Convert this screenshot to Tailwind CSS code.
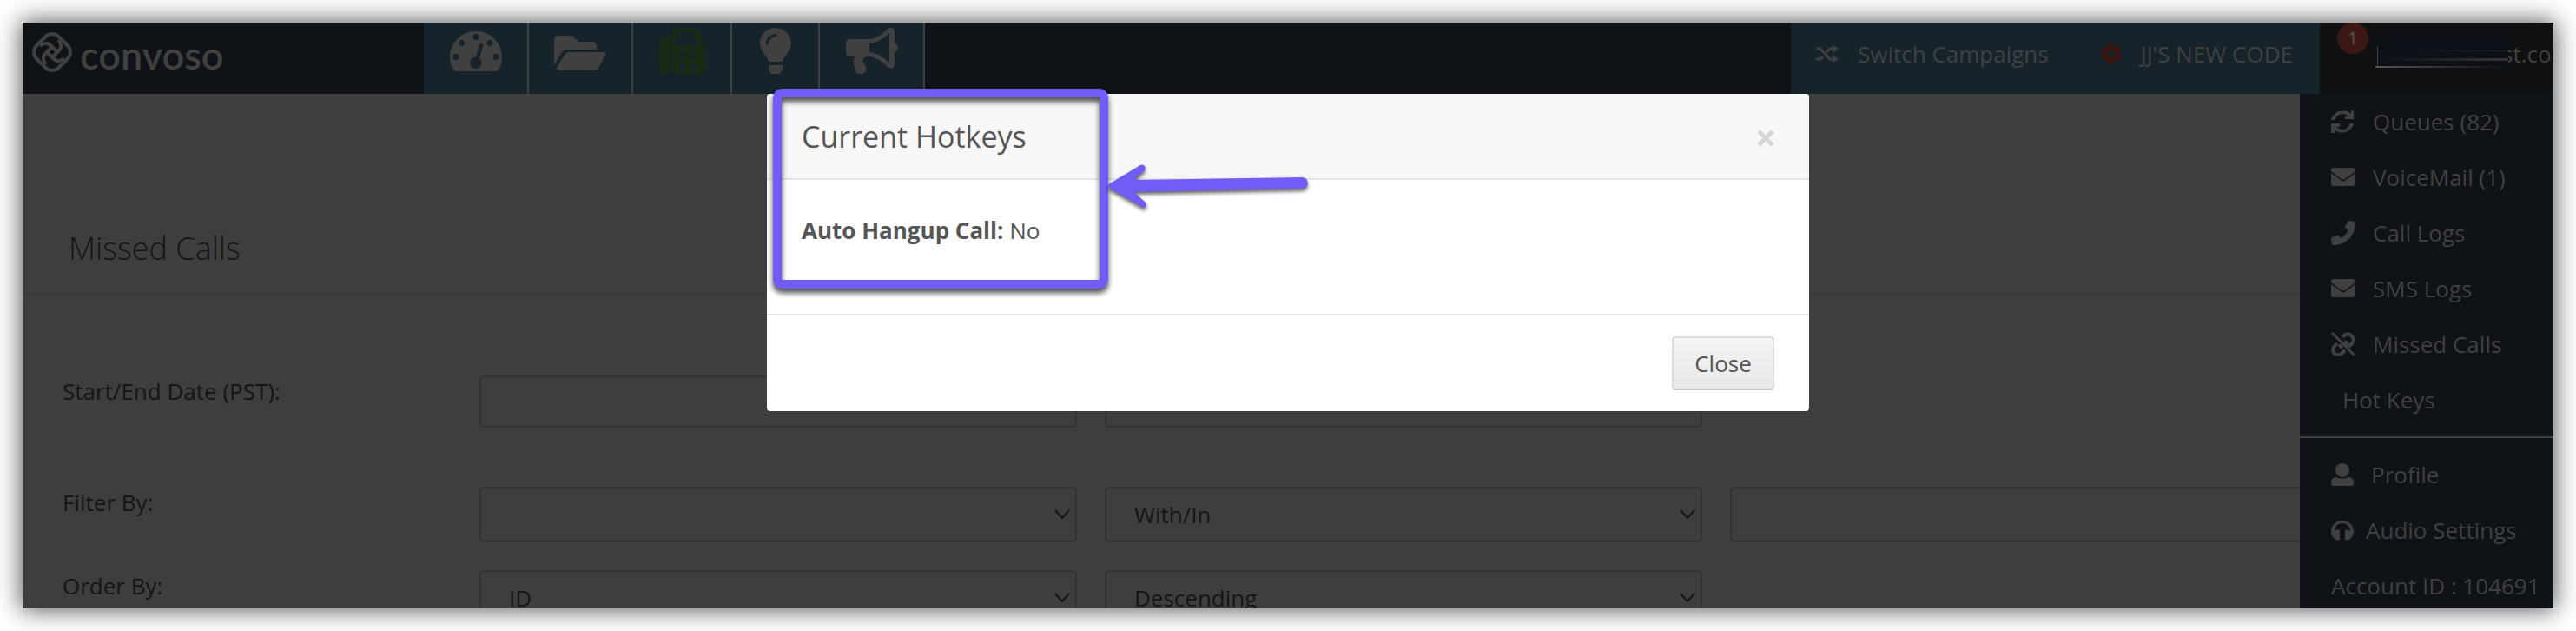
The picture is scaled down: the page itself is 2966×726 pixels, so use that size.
<!DOCTYPE html>
<html lang="en">
<head>
    <meta charset="UTF-8">
    <meta name="viewport" content="width=device-width, initial-scale=1.0">
    <title>Missed Calls</title>
    <script src="https://cdn.jsdelivr.net/npm/@tailwindcss/browser@4"></script>
</head>
<body class="bg-white p-[26px] h-screen overflow-hidden font-['Open_Sans',sans-serif] text-[26px] text-[#404040]">
    <div class="relative h-full shadow-[0_0_26px_2px_rgba(0,0,0,0.65)]">
    <div class="relative h-full overflow-hidden bg-[#3e3e3e] flex flex-col">

        <!-- Top bar -->
        <header class="flex h-[82px] shrink-0 bg-[#0f1216]">
            <a href="#" class="flex items-center gap-2 w-[462px] pl-[10px] pb-2 font-['Lato',sans-serif] font-semibold text-[45px] leading-[48px]">
                <svg class="size-12 mt-[-6px]" viewBox="0 0 48 48" fill="none" stroke="currentColor" stroke-width="4">
                    <rect x="6" y="6" width="36" height="36" rx="11" transform="rotate(45 24 24)"/>
                    <path d="M10 17c4-4 9-4 12-1l9 9"/>
                    <path d="M10 17c4-4 9-4 12-1l9 9" transform="rotate(90 24 24)"/>
                    <path d="M10 17c4-4 9-4 12-1l9 9" transform="rotate(180 24 24)"/>
                    <path d="M10 17c4-4 9-4 12-1l9 9" transform="rotate(270 24 24)"/>
                </svg>
                <span>convoso</span>
            </a>
            <nav class="flex bg-[#16232b]">
                <a href="#" aria-label="Dashboard" class="w-[121px] border-r-2 border-[#404040] flex justify-center pt-[10px]">
                    <svg class="w-[60px] h-[46px]" viewBox="0 0 60 46" fill="currentColor">
                        <path fill-rule="evenodd" d="M30 0C13 0 0 13 0 30c0 5 1 10 4 14 1 1 2 2 3 2h46c1 0 2-1 3-2 3-4 4-9 4-14C60 13 47 0 30 0zM30 3a3.500 3.500 0 1 1 0 7a3.500 3.500 0 0 1 0-7zM13.500 10a3.500 3.500 0 1 1 0 7a3.500 3.500 0 0 1 0-7zM46 10a3.500 3.500 0 1 1 0 7a3.500 3.500 0 0 1 0-7zM7 26a3.500 3.500 0 1 1 0 7a3.500 3.500 0 0 1 0-7zM53 26a3.500 3.500 0 1 1 0 7a3.500 3.500 0 0 1 0-7zM34.500 15c.5-2 4.500-1 4 1l-4.500 15c5 4 2 12-4 12c-7 0-9-9-3.500-12.500c1-.7 2-1 3.500-1z"/>
                    </svg>
                </a>
                <a href="#" aria-label="Files" class="w-[120px] border-r-2 border-[#404040] flex justify-center pt-[15px]">
                    <svg class="w-[60px] h-[40px]" viewBox="0 0 60 40" fill="currentColor">
                        <path d="M0 34V5c0-3 2-5 5-5h16l7 7h16c3 0 5 2 5 5v4H16c-4 0-6 1-8 4L0 34zM3 37l9-15c1-2 3-3 5-3h40c2 0 3 2 2 4l-8 14c-1 2-3 3-5 3H5c-2 0-3-2-2-3z"/>
                    </svg>
                </a>
                <a href="#" aria-label="Fax" class="w-[114px] border-r-2 border-[#404040] flex justify-center pt-[6px] text-[#172a14]">
                    <svg class="w-[53px] h-[53px]" viewBox="0 0 53 53" fill="currentColor">
                        <path fill-rule="evenodd" d="M6.500 10C10 10 13 12 13 16v31c0 4-3 6-6.500 6S0 51 0 47V16c0-4 3-6 6.500-6zM19 0h22l8 8v10c2 1 4 3 4 6v23c0 3-3 6-6 6H20c-3 0-5-3-5-6V4c0-2 2-4 4-4zM20 5v15h24V11h-5V5zM23 27v7h6v-7zM36 27v7h6v-7zM23 40v7h6v-7zM36 40v7h6v-7z"/>
                    </svg>
                </a>
                <a href="#" aria-label="Tips" class="w-[101px] border-r-2 border-[#404040] flex justify-center pt-[6px]">
                    <svg class="w-[36px] h-[53px]" viewBox="0 0 36 53" fill="currentColor">
                        <path fill-rule="evenodd" d="M18 0C8 0 0 8 0 18c0 9 8 13 10 21h16c2-8 10-12 10-21C36 8 28 0 18 0zM18 7c-6 0-11 5-11 11a1 1 0 0 0 3 0c0-4 4-8 8-8a1 1 0 0 0 0-3zM10 43h16v5l-3 5H13l-3-5z"/>
                    </svg>
                </a>
                <a href="#" aria-label="Announcements" class="w-[121px] border-r-2 border-[#404040] flex justify-center pt-[6px]">
                    <svg class="w-[60px] h-[53px]" viewBox="0 0 60 53" fill="currentColor">
                        <path fill-rule="evenodd" d="M5 13h20C36 13 43 6 47 2c4-4 9-2 9 2v14c5 1 5 9 0 10v14c0 5-5 6-9 2-4-4-10-9-19-11-4-1-7 0-8 3-2 5 5 7 3 13 0 1-1 4-5 4s-6 0-7-3c-2-6-3-11-1-17H5c-3 0-5-2-5-5V18c0-3 2-5 5-5zM27 18v10c10 1 17 7 23 12V6c-6 6-13 11-23 12z"/>
                    </svg>
                </a>
            </nav>
            <div class="ml-auto flex items-center w-[609px] pl-[29px] pb-[10px] bg-[#16232b]">
                <a href="#" class="flex items-center gap-[22px]">
                    <svg class="w-[26px] h-[20px]" viewBox="0 0 26 20" fill="none" stroke="currentColor" stroke-width="3">
                        <path d="M0 4h5l11 12h5M0 16h5l3-3M12 8l4-4h5"/>
                        <path d="M19 0l7 4-7 5zM19 11l7 5-7 4z" fill="currentColor" stroke="none"/>
                    </svg>
                    <span>Switch Campaigns</span>
                </a>
                <a href="#" class="flex items-center gap-[22px] ml-[60px]">
                    <svg class="size-6 text-[#3d1510]" viewBox="0 0 24 24" fill="currentColor">
                        <path fill-rule="evenodd" d="M9.500 0h5l1 4 2 1 4-1 2.500 4-3 3v2l3 3-2.500 4-4-1-2 1-1 4h-5l-1-4-2-1-4 1L0 16l3-3v-2L0 8l2.500-4 4 1 2-1zM12 8a4 4 0 1 0 0 8a4 4 0 0 0 0-8z"/>
                    </svg>
                    <span>JJ'S NEW CODE</span>
                </a>
            </div>
            <div class="relative w-[269px] bg-[#0f1012] overflow-hidden">
                <a href="#" class="absolute left-[210px] top-[18px] leading-9">st.com</a>
                <span class="absolute left-[64px] top-[50px] w-[150px] h-[2px] bg-linear-to-r from-[#555] to-transparent"></span>
                <span class="absolute left-[67px] top-[12px] w-[150px] h-[38px] bg-[#0e1017]"></span>
                <span class="absolute left-[66px] top-[27px] w-px h-[23px] bg-[#404040]"></span>
                <span class="absolute left-[90px] top-[32px] w-[127px] h-px bg-linear-to-r from-transparent to-[#262626]"></span>
                <span class="absolute left-[70px] top-[41px] w-[147px] h-[3px] bg-linear-to-r from-transparent to-[#363636]"></span>
                <span class="absolute left-[20px] top-0 size-9 rounded-full bg-[#3c1815] text-center text-[20px] leading-9 text-[#555]">1</span>
            </div>
        </header>

        <div class="flex flex-1 min-h-0">
            <!-- Page -->
            <main class="flex-1 min-w-0 text-[#151515]">
                <h1 class="h-[232px] pt-[153px] pl-[53px] border-b-4 border-[#3b3b3b] font-light text-[36px] leading-[49px]">Missed Calls</h1>
                <form class="pt-[92px] pl-[46px]">
                    <div class="flex gap-8 mb-[68px]">
                        <label for="start" class="w-[448px] shrink-0 leading-9">Start/End Date (PST):</label>
                        <input id="start" type="text" class="w-[688px] h-[60px] shrink-0 px-8 rounded border-2 border-[#343434]">
                        <input aria-label="End date" type="text" class="w-[688px] h-[60px] shrink-0 px-8 rounded border-2 border-[#343434]">
                    </div>
                    <div class="flex gap-8 mb-8 overflow-hidden">
                        <label for="filter" class="w-[448px] shrink-0 leading-9">Filter By:</label>
                        <div class="relative w-[688px] shrink-0">
                            <select id="filter" class="appearance-none w-full h-16 px-8 rounded border-2 border-[#343434]"><option></option></select>
                            <svg class="absolute right-[7px] top-[26px] w-[20px] h-[12px] pointer-events-none" viewBox="0 0 20 12" fill="none" stroke="currentColor" stroke-width="2"><path d="M2 1l8 9 8-9"/></svg>
                        </div>
                        <div class="relative w-[688px] shrink-0">
                            <select aria-label="Match" class="appearance-none w-full h-16 px-8 rounded border-2 border-[#343434]"><option>With/In</option></select>
                            <svg class="absolute right-[7px] top-[26px] w-[20px] h-[12px] pointer-events-none" viewBox="0 0 20 12" fill="none" stroke="currentColor" stroke-width="2"><path d="M2 1l8 9 8-9"/></svg>
                        </div>
                        <input aria-label="Filter value" type="text" class="w-[688px] h-16 shrink-0 px-8 rounded border-2 border-[#343434]">
                    </div>
                    <div class="flex gap-8">
                        <label for="order" class="w-[448px] shrink-0 leading-9">Order By:</label>
                        <div class="relative w-[688px] shrink-0">
                            <select id="order" class="appearance-none w-full h-16 px-8 rounded border-2 border-[#343434]"><option>ID</option></select>
                            <svg class="absolute right-[7px] top-[26px] w-[20px] h-[12px] pointer-events-none" viewBox="0 0 20 12" fill="none" stroke="currentColor" stroke-width="2"><path d="M2 1l8 9 8-9"/></svg>
                        </div>
                        <div class="relative w-[688px] shrink-0">
                            <select aria-label="Direction" class="appearance-none w-full h-16 px-8 rounded border-2 border-[#343434]"><option>Descending</option></select>
                            <svg class="absolute right-[7px] top-[26px] w-[20px] h-[12px] pointer-events-none" viewBox="0 0 20 12" fill="none" stroke="currentColor" stroke-width="2"><path d="M2 1l8 9 8-9"/></svg>
                        </div>
                    </div>
                </form>
            </main>

            <!-- User menu -->
            <aside class="w-[292px] shrink-0 bg-[#0f1216] leading-[64px] whitespace-nowrap">
                <ul class="pb-[10px] border-b-2 border-[#404040]">
                    <li><a href="#" class="flex items-center gap-5 pl-9">
                        <svg class="size-7" viewBox="0 0 28 28" fill="currentColor">
                            <path d="M26 1v10H16V8h4C15 3 7 4 4 12H0C3 1 16-2 23 5V1zM0 27V16h10v4H6c5 5 13 4 16-4h4C23 27 10 30 4 23v4z"/>
                        </svg>
                        Queues (82)
                    </a></li>
                    <li><a href="#" class="flex items-center gap-5 pl-9">
                        <svg class="size-7" viewBox="0 0 28 28" fill="currentColor">
                            <path d="M3 3h22c2 0 3 1 3 3v1L16 16c-1 1-3 1-4 0L0 7V6c0-2 1-3 3-3zM0 9l11 8c2 2 4 2 6 0l11-8v12c0 2-1 3-3 3H3c-2 0-3-1-3-3z"/>
                        </svg>
                        VoiceMail (1)
                    </a></li>
                    <li><a href="#" class="flex items-center gap-5 pl-9">
                        <svg class="size-7" viewBox="0 0 28 28" fill="currentColor">
                            <path d="M21 0l6 1c1 0 1 1 1 2C28 17 17 28 3 28c-1 0-1 0-2-1l-1-6c0-1 0-2 1-2l6-2c1-1 2 0 2 0l2 3c4-2 7-5 9-9l-3-2c-1-1-1-1-1-2l3-6c0-1 1-1 2-1z"/>
                        </svg>
                        Call Logs
                    </a></li>
                    <li><a href="#" class="flex items-center gap-5 pl-9">
                        <svg class="size-7" viewBox="0 0 28 28" fill="currentColor">
                            <path d="M3 3h22c2 0 3 1 3 3v1L16 16c-1 1-3 1-4 0L0 7V6c0-2 1-3 3-3zM0 9l11 8c2 2 4 2 6 0l11-8v12c0 2-1 3-3 3H3c-2 0-3-1-3-3z"/>
                        </svg>
                        SMS Logs
                    </a></li>
                    <li><a href="#" class="flex items-center gap-5 pl-9">
                        <svg class="size-7" viewBox="0 0 28 28" fill="none" stroke="currentColor" stroke-width="4">
                            <path d="M1 1l26 26" stroke-width="3"/>
                            <path d="M13 6c4-5 9-4 11-1 3 3 2 6 0 8l-4 4M16 21l-3 3c-3 3-7 3-9 1-3-3-2-7 0-9l3-3M15 11c3 1 4 3 4 5M13 18c-2-1-3-2-3-4"/>
                        </svg>
                        Missed Calls
                    </a></li>
                    <li><a href="#" class="block pl-[49px]">Hot Keys</a></li>
                </ul>
                <ul class="pt-[10px]">
                    <li><a href="#" class="flex items-center gap-5 pl-9">
                        <svg class="w-[26px] h-7" viewBox="0 0 26 28" fill="currentColor">
                            <circle cx="13" cy="9" r="8"/>
                            <path d="M6 17c4 2 10 2 14 0 4 0 6 3 6 6 0 3-1 4-3 4H3c-2 0-3-1-3-4 0-3 2-6 6-6z"/>
                        </svg>
                        Profile
                    </a></li>
                    <li><a href="#" class="flex items-center gap-[14px] pl-9">
                        <svg class="w-[26px] h-7" viewBox="0 0 26 28" fill="currentColor">
                            <path d="M13 3C5 3 0 9 0 16c0 4 2 6 4 8 2 2 6 2 6 0V15c0-2-4-2-6 0C4 9 8 6 13 6s9 3 9 9c-2-2-6-2-6 0v9c0 2 4 2 6 0 2-2 4-4 4-8C26 9 21 3 13 3z"/>
                        </svg>
                        Audio Settings
                    </a></li>
                    <li class="pl-9">Account ID : 104691</li>
                </ul>
            </aside>
        </div>
    </div>

    <!-- Hotkeys dialog -->
    <div role="dialog" aria-labelledby="dialogTitle" class="absolute top-[82px] left-1/2 -translate-x-1/2 w-[1200px] rounded-[4px] overflow-hidden bg-white text-[#555]">
        <div class="flex items-center justify-between h-[99px] px-10 border-b-2 border-[#e5e5e5] bg-[#f7f7f7]">
            <h2 id="dialogTitle" class="text-[34px] leading-[46px]">Current Hotkeys</h2>
            <button type="button" aria-label="Close dialog" class="mt-1 text-[#d6d6d6]">
                <svg class="size-5" viewBox="0 0 20 20" fill="none" stroke="currentColor" stroke-width="5"><path d="M2 2l16 16M18 2L2 18"/></svg>
            </button>
        </div>
        <p class="h-[156px] pt-10 pl-10 border-b-2 border-[#e5e5e5] leading-[36px]"><b>Auto Hangup Call:</b> No</p>
        <div class="flex justify-end py-6 px-10">
            <button type="button" class="w-[118px] h-[62px] rounded-[4px] border-2 border-[#dcdcdc] border-b-[#c8c8c8] bg-linear-to-b from-[#f4f4f4] to-[#e8e8e8]">Close</button>
        </div>
    </div>

    <!-- Callout around the setting -->
    <div class="absolute top-[76px] left-1/2 -ml-[593px] w-[386px] h-[230px] rounded-[10px] border-10 border-[#705df6] drop-shadow-[0_5px_3px_rgba(0,0,0,0.7)]"></div>
    <svg class="absolute top-[154px] left-1/2 -ml-[207px] w-[240px] h-[70px] drop-shadow-[0_3px_2px_rgba(0,0,0,0.6)]" viewBox="0 0 240 70" fill="#705df6">
        <path d="M2 31L37 10c4-2 7 2 5 6l-12 11 193-3c9 0 9 13 0 13L30 41l13 12c3 4 0 7-4 5L2 37c-3-2-3-4 0-6z"/>
    </svg>
    </div>
</body>
</html>
